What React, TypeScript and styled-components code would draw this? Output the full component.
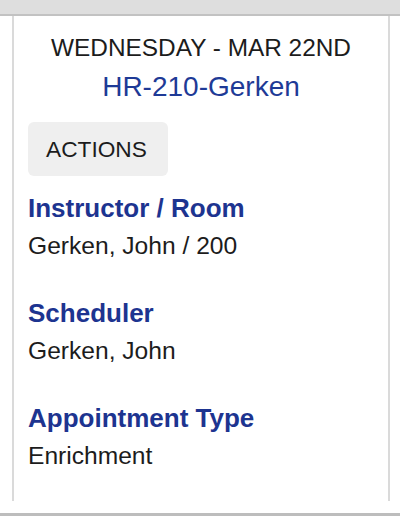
import styled, {createGlobalStyle} from "styled-components"

const GlobalStyle = createGlobalStyle`
  html, body {
    margin: 0;
    padding: 0;
    background: #ffffff;
    font-family: "Liberation Sans", Arial, sans-serif;
    color: #1c1c1c;
  }
`

type Field = {
  // Label shown in blue above the value
  label: string
  value: string
}

const fields: Field[] = [
  {label: "Instructor / Room", value: "Gerken, John / 200"},
  {label: "Scheduler", value: "Gerken, John"},
  {label: "Appointment Type", value: "Enrichment"},
]

const Page = styled.div`
  width: 400px;
  height: 529px;
  display: flex;
  flex-direction: column;
  overflow: hidden;
`

const TopBar = styled.div`
  height: 14px;
  flex: none;
  background: #dedede;
  border-bottom: 2px solid #c2c2c2;
`

const Panel = styled.div`
  margin: 0 10px 0 12px;
  height: 485px;
  box-sizing: border-box;
  border-left: 2px solid #dadada;
  border-right: 2px solid #dadada;
  padding: 18px 14px 0 14px;
  display: flex;
  flex-direction: column;
`

const DateTitle = styled.div`
  font-size: 24.4px;
  line-height: 28px;
  text-align: center;
  text-transform: uppercase;
  color: #1c1c1c;
`

const CourseLink = styled.a`
  display: block;
  margin-top: 8px;
  font-size: 28px;
  line-height: 34px;
  text-align: center;
  color: #1e3a96;
  text-decoration: none;
`

const ActionsButton = styled.button`
  align-self: flex-start;
  margin-top: 18px;
  width: 140px;
  height: 54px;
  padding: 0 0 0 18px;
  text-align: left;
  border: none;
  border-radius: 6px;
  background: #efefef;
  font-family: "Liberation Sans", Arial, sans-serif;
  font-size: 22.7px;
  color: #1c1c1c;
`

const FieldList = styled.div`
  margin-top: 17px;
  display: flex;
  flex-direction: column;
  gap: 37px;
`

const FieldBlock = styled.div`
  display: flex;
  flex-direction: column;
  gap: 8px;
`

const FieldLabel = styled.div`
  font-size: 26px;
  line-height: 30px;
  font-weight: bold;
  color: #1d3490;
`

const FieldValue = styled.div`
  font-size: 24.6px;
  line-height: 30px;
  color: #1c1c1c;
`

const BottomRule = styled.div`
  margin-top: 12px;
  height: 3px;
  flex: none;
  background: #bdbdbd;
`

export default function App() {
  return (
    <Page>
      <GlobalStyle />
      <TopBar />
      <Panel>
        <DateTitle>Wednesday - Mar 22nd</DateTitle>
        <CourseLink href="#">HR-210-Gerken</CourseLink>
        <ActionsButton type="button">ACTIONS</ActionsButton>
        <FieldList>
          {fields.map((field) => (
            <FieldBlock key={field.label}>
              <FieldLabel>{field.label}</FieldLabel>
              <FieldValue>{field.value}</FieldValue>
            </FieldBlock>
          ))}
        </FieldList>
      </Panel>
      <BottomRule />
    </Page>
  )
}
